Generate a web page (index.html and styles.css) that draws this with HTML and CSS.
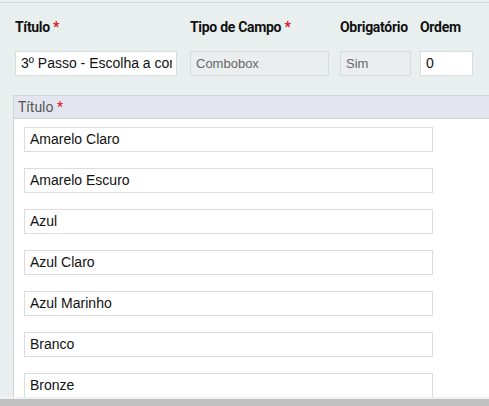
FILE: index.html
```html
<!DOCTYPE html>
<html lang="pt">
<head>
<meta charset="utf-8">
<link rel="stylesheet" href="styles.css">
</head>
<body>
<div class="page">
  <div class="fields">
    <div class="field f-titulo">
      <label class="lbl">Título <span class="req">*</span></label>
      <div class="inp"><span class="clip">3º Passo - Escolha a cor</span></div>
    </div>
    <div class="field f-tipo">
      <label class="lbl">Tipo de Campo <span class="req">*</span></label>
      <div class="inp dis">Combobox</div>
    </div>
    <div class="field f-obr">
      <label class="lbl">Obrigatório</label>
      <div class="inp dis">Sim</div>
    </div>
    <div class="field f-ord">
      <label class="lbl">Ordem</label>
      <div class="inp">0</div>
    </div>
  </div>
  <div class="panel">
    <div class="panel-head">Título <span class="req">*</span></div>
    <div class="panel-body">
      <div class="item">Amarelo Claro</div>
      <div class="item">Amarelo Escuro</div>
      <div class="item">Azul</div>
      <div class="item">Azul Claro</div>
      <div class="item">Azul Marinho</div>
      <div class="item">Branco</div>
      <div class="item">Bronze</div>
    </div>
  </div>
</div>
<div class="hscroll"><div class="thumb"></div></div>
</body>
</html>
```
FILE: styles.css
```css
html, body {
  margin: 0;
  padding: 0;
  height: 406px;
  overflow: hidden;
}
body {
  background: #e8efee;
  font-family: "Liberation Sans", Arial, sans-serif;
  position: relative;
}
.page {
  margin-top: 2px;
  border-top: 1px solid #d3dbda;
  height: 394px;
  overflow: hidden;
}
.fields {
  display: flex;
  padding: 16px 0 0 15px;
}
.field {
  display: flex;
  flex-direction: column;
}
.f-titulo { width: 162px; margin-right: 13px; }
.f-tipo { width: 139px; margin-right: 11px; }
.f-obr { width: 71px; margin-right: 9px; }
.f-ord { width: 53px; }
.lbl {
  font-family: Roboto, "Liberation Sans", sans-serif;
  font-weight: bold;
  font-size: 14px;
  line-height: 17px;
  color: #111;
  height: 17px;
  margin-bottom: 15px;
  white-space: nowrap;
  letter-spacing: -0.3px;
}
.req { color: #e0101b; }
.inp {
  box-sizing: border-box;
  height: 25px;
  border: 1px solid #d8dcdc;
  background: #fff;
  font-size: 14px;
  line-height: 23px;
  padding-left: 5px;
  color: #111;
  white-space: nowrap;
  overflow: hidden;
}
.clip {
  display: block;
  width: 151px;
  overflow: hidden;
  white-space: nowrap;
}
.inp.dis {
  background: #eaeeee;
  color: #666;
  font-size: 13px;
}
.panel {
  margin: 19px 0 0 13px;
  border-left: 1px solid #cfd3d8;
  border-top: 1px solid #cfd3d8;
  background: #fff;
  height: 320px;
}
.panel-head {
  background: #e3e6ee;
  border-bottom: 1px solid #d2d6dc;
  height: 22px;
  line-height: 22px;
  padding-left: 4px;
  font-family: Roboto, "Liberation Sans", sans-serif;
  font-size: 14px;
  color: #555;
}
.panel-body {
  padding: 8px 0 0 10px;
  display: flex;
  flex-direction: column;
  gap: 16px;
}
.item {
  box-sizing: border-box;
  width: 409px;
  height: 25px;
  border: 1px solid #dcdcdc;
  background: #fff;
  font-size: 14px;
  line-height: 23px;
  padding-left: 5px;
  color: #111;
}
.hscroll {
  position: absolute;
  left: 0;
  right: 0;
  bottom: 0;
  height: 9px;
  background: #f1f1f1;
}
.thumb {
  margin-top: 2px;
  height: 7px;
  background: #c1c1c1;
}
```
